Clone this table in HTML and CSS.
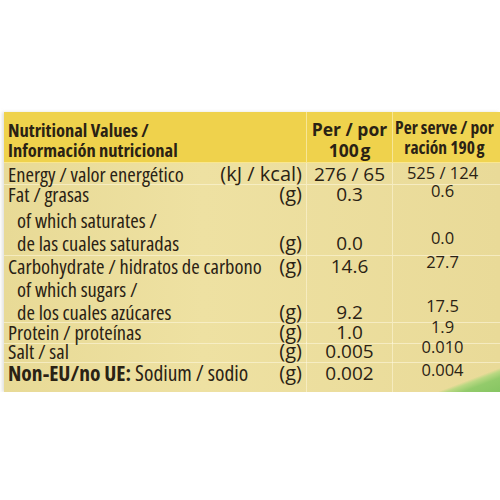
FILE: index.html
```html
<!DOCTYPE html>
<html lang="en">
<head>
<meta charset="utf-8">
<title>Nutritional Values</title>
<link rel="stylesheet" href="styles.css">
</head>
<body>
<div class="page">
  <div class="label">
    <div class="row head">
      <div class="cell name h-name">Nutritional Values /<br>Información nutricional</div>
      <div class="cell v h-col">Per / por<br>100&#8202;g</div>
      <div class="cell v2 h-col">Per serve / por<br>ración 190&#8202;g</div>
    </div>
    <div class="row r-energy sep">
      <div class="cell name"><span>Energy / valor energético</span><span class="unit">(kJ / kcal)</span></div>
      <div class="cell v">276 / 65</div>
      <div class="cell v2">525 / 124</div>
    </div>
    <div class="row r-fat">
      <div class="cell name"><span>Fat / grasas</span><span class="unit">(g)</span></div>
      <div class="cell v">0.3</div>
      <div class="cell v2">0.6</div>
    </div>
    <div class="row r-sub1">
      <div class="cell name sub"><span>of which saturates /</span></div>
      <div class="cell v"></div>
      <div class="cell v2"></div>
    </div>
    <div class="row r-sub2 sep">
      <div class="cell name sub"><span>de las cuales saturadas</span><span class="unit">(g)</span></div>
      <div class="cell v">0.0</div>
      <div class="cell v2">0.0</div>
    </div>
    <div class="row r-carb">
      <div class="cell name"><span>Carbohydrate / hidratos de carbono</span><span class="unit">(g)</span></div>
      <div class="cell v">14.6</div>
      <div class="cell v2">27.7</div>
    </div>
    <div class="row r-sub3">
      <div class="cell name sub"><span>of which sugars /</span></div>
      <div class="cell v"></div>
      <div class="cell v2"></div>
    </div>
    <div class="row r-sub4 sep">
      <div class="cell name sub"><span>de los cuales azúcares</span><span class="unit">(g)</span></div>
      <div class="cell v">9.2</div>
      <div class="cell v2">17.5</div>
    </div>
    <div class="row r-prot sep">
      <div class="cell name"><span>Protein / proteínas</span><span class="unit">(g)</span></div>
      <div class="cell v">1.0</div>
      <div class="cell v2">1.9</div>
    </div>
    <div class="row r-salt sep">
      <div class="cell name"><span>Salt / sal</span><span class="unit">(g)</span></div>
      <div class="cell v">0.005</div>
      <div class="cell v2">0.010</div>
    </div>
    <div class="row r-na">
      <div class="cell name"><span><b>Non-EU/no UE:</b> Sodium / sodio</span><span class="unit">(g)</span></div>
      <div class="cell v">0.002</div>
      <div class="cell v2 green">0.004</div>
    </div>
  </div>
</div>
</body>
</html>
```
FILE: styles.css
```css
html, body {
  margin: 0;
  padding: 0;
  background: #ffffff;
}
.page {
  padding: 112px 0 0 4px;
  font-family: "Open Sans", "Noto Sans", "DejaVu Sans", sans-serif;
  font-stretch: 75%;
  color: #2a2214;
}
.label {
  width: 496px;
  background: linear-gradient(90deg, #e8da96 0%, #eee1a2 40%, #e9da98 100%);
  box-shadow: -2px 0 3px rgba(200, 200, 190, 0.5);
}
.row {
  display: grid;
  grid-template-columns: 303px 86px 107px;
  font-size: 20.5px;
  line-height: 18px;
}
.cell {
  display: flex;
  align-items: center;
  white-space: nowrap;
}
.name {
  justify-content: space-between;
  padding: 0 4px 0 4px;
  border-right: 1px solid rgba(255, 250, 225, 0.5);
}
.unit {
  font-size: 20px;
  font-stretch: 100%;
}
.sub {
  padding-left: 13px;
}
.v {
  justify-content: center;
  font-size: 19px;
  font-stretch: 100%;
  border-right: 1px solid rgba(255, 250, 225, 0.5);
}
.v2 {
  justify-content: center;
  font-size: 16.5px;
  font-stretch: 100%;
  padding-right: 8px;
}
.sep .cell {
  border-bottom: 1px solid rgba(255, 250, 225, 0.55);
}
.head {
  height: 51px;
  background: #efd24c;
  font-weight: 700;
  font-size: 18.5px;
  font-stretch: 75%;
  line-height: 20px;
}
.head .cell {
  border-bottom: 1px solid rgba(255, 240, 170, 0.7);
}
.h-name {
  align-items: flex-start;
  padding-top: 8px;
  box-sizing: border-box;
}
.h-col {
  text-align: center;
  align-items: flex-start;
  padding-top: 7px;
  box-sizing: border-box;
}
.v.h-col {
  font-size: 17.5px;
  font-stretch: 100%;
  line-height: 21px;
}
.v2.h-col {
  font-size: 17.5px;
  font-stretch: 75%;
  line-height: 20px;
  padding-top: 5px;
  padding-right: 4px;
  background: #f0d451;
}
.r-energy { height: 22px; }
.r-fat { height: 20px; }
.r-fat .cell { padding-bottom: 2px; }
.r-sub1 { height: 27px; }
.r-sub1 .cell { padding-top: 2px; }
.r-sub2 { height: 24px; }
.r-sub2 .cell { padding-bottom: 2px; }
.r-carb { height: 21px; }
.r-carb .cell { padding-bottom: 2px; }
.r-sub3 { height: 24px; }
.r-sub3 .cell { padding-bottom: 1px; }
.r-sub4 { height: 22px; }
.r-prot { height: 19px; }
.r-prot .cell { padding-bottom: 2px; }
.r-salt { height: 20px; }
.r-salt .cell { padding-bottom: 2px; }
.r-na {
  height: 30px;
  font-size: 21.5px;
}
.r-na .cell {
  align-items: flex-start;
  padding-top: 2px;
}
.r-na b {
  font-weight: 700;
}

/* right column follows the curve of the bottle: values sit a little higher */
.row .v2:not(.h-col) {
  align-items: flex-start;
  line-height: 2px;
  padding-bottom: 0;
}
.r-energy .v2 { padding-top: 9px; }
.r-fat .v2 { padding-top: 5px; }
.r-sub2 .v2 { padding-top: 5px; }
.r-carb .v2 { padding-top: 5px; }
.r-sub4 .v2 { padding-top: 4px; }
.r-prot .v2 { padding-top: 3px; }
.r-salt .v2 { padding-top: 4px; }
.r-na .v2 { padding-top: 7px; }

.green {
  background: linear-gradient(159deg, rgba(233, 218, 152, 0) 66%, #b9d882 71%, #93cb6b 80%, #86c562 100%);
}
```
